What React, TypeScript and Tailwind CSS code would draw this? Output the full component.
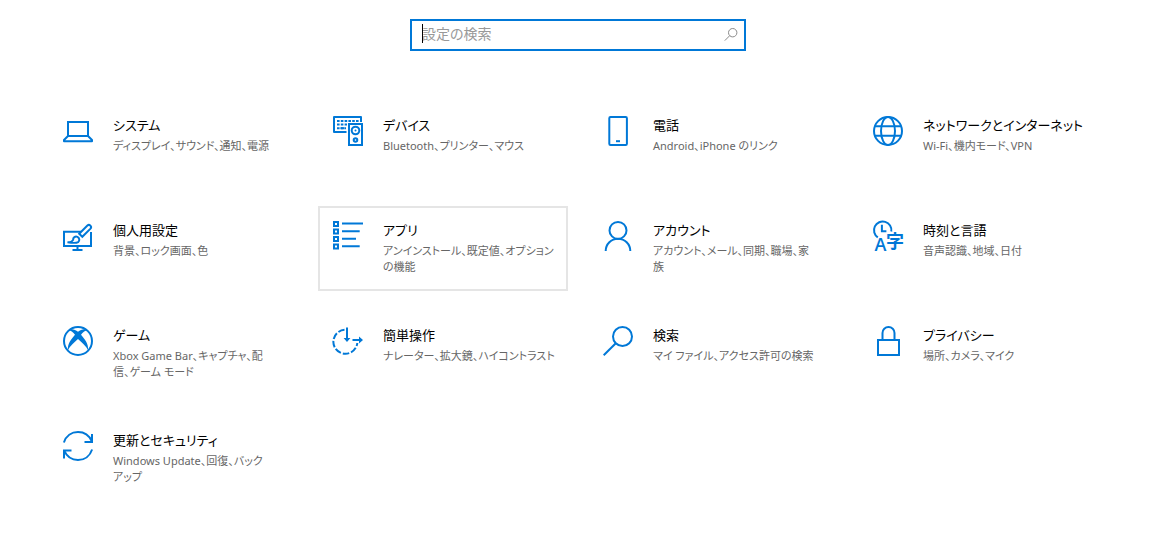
import type { ReactNode } from 'react'

type Category = {
    id: string
    title: string
    description: string[]
    icon: ReactNode
    hovered?: boolean
}

function Icon({ children }: { children: ReactNode }) {
    return (
        <svg
            viewBox="0 0 30 30"
            fill="none"
            stroke="#0078d7"
            strokeWidth="2"
            aria-hidden="true"
            className="size-[30px] shrink-0 overflow-visible"
        >
            {children}
        </svg>
    )
}

const categories: Category[] = [
    {
        id: 'system',
        title: 'システム',
        description: ['ディスプレイ、サウンド、通知、電源'],
        icon: (
            <Icon>
                <path d="M5 20V6h20v14" />
                <path d="M5 20h20l4 4v1.2H1V24z" strokeLinejoin="round" />
            </Icon>
        ),
    },
    {
        id: 'devices',
        title: 'デバイス',
        description: ['Bluetooth、プリンター、マウス'],
        icon: (
            <Icon>
                <path d="M13.5 16H1V1h27v5" strokeLinejoin="round" />
                <path d="M4 5h22" strokeDasharray="2.6 1.2" />
                <path d="M4 8.5h10M4 12.2h9" strokeDasharray="2.6 1.2" />
                <path d="M7.5 12.2h4" />
                <path d="M16 8h13v21H16z" />
                <circle cx="22.5" cy="14.5" r="3.8" />
                <circle cx="22.5" cy="14.5" r="1" fill="#0078d7" stroke="none" />
                <circle cx="22.5" cy="24" r="1.8" />
            </Icon>
        ),
    },
    {
        id: 'phone',
        title: '電話',
        description: ['Android、iPhone のリンク'],
        icon: (
            <Icon>
                <rect x="6.3" y="1" width="17.6" height="28" rx="1.2" />
                <path d="M13 25.2h4" />
            </Icon>
        ),
    },
    {
        id: 'network',
        title: 'ネットワークとインターネット',
        description: ['Wi-Fi、機内モード、VPN'],
        icon: (
            <Icon>
                <circle cx="15" cy="15" r="14" />
                <ellipse cx="15" cy="15" rx="7" ry="14" />
                <path d="M2 10.2h26M2 19.8h26" />
            </Icon>
        ),
    },
    {
        id: 'personalization',
        title: '個人用設定',
        description: ['背景、ロック画面、色'],
        icon: (
            <Icon>
                <path d="M18 10.8H1V25h27V11" />
                <path d="M14.5 25v4M9.5 29h10" />
                <path d="M16.2 12.7 24.4 4.5a2.2 2.2 0 0 1 3.1 3.1l-8.2 8.2z" fill="#fff" />
                <path d="M4.5 21.3c3.5 0 4.8-.8 5.6-2.4a3.1 3.1 0 1 1 5 2.2c-1.4.9-6 .9-10.600.2z" fill="#fff" />
            </Icon>
        ),
    },
    {
        id: 'apps',
        title: 'アプリ',
        description: ['アンインストール、既定値、オプション', 'の機能'],
        hovered: true,
        icon: (
            <Icon>
                <path d="M1 1h4v4H1zM1 8.5h4v4H1zM1 16h4v4H1zM1 23.5h4v4H1z" />
                <path d="M9 2.6h21M9 10.2h17.7M9 17.7h14M9 25.3h17.7" />
            </Icon>
        ),
    },
    {
        id: 'accounts',
        title: 'アカウント',
        description: ['アカウント、メール、同期、職場、家', '族'],
        icon: (
            <Icon>
                <circle cx="15" cy="9.4" r="8.5" />
                <path d="M2.7 30a12.3 12.3 0 0 1 24.6 0" />
            </Icon>
        ),
    },
    {
        id: 'time',
        title: '時刻と言語',
        description: ['音声認識、地域、日付'],
        icon: (
            <Icon>
                <path d="M4.8 16.4A8.7 8.7 0 1 1 18.3 10.5" />
                <path d="M8.9 3.7v6.6h4.5" />
                <g fill="#0078d7" stroke="none">
                    <text x="1.5" y="30" className="font-['Open_Sans',sans-serif] text-[18px] font-semibold">A</text>
                    <text x="13" y="26.5" className="font-['Noto_Sans_CJK_JP',sans-serif] text-[18px] font-bold">字</text>
                </g>
            </Icon>
        ),
    },
    {
        id: 'gaming',
        title: 'ゲーム',
        description: ['Xbox Game Bar、キャプチャ、配', '信、ゲーム モード'],
        icon: (
            <Icon>
                <circle cx="15" cy="15" r="14" />
                <path
                    d="M6 4.5C8.5 2.2 12 3.7 15 5.8c3-2.1 6.5-3.6 9-1.3-2.2.1-4 1.8-6 4.2 3.8 4.3 7.8 9.6 7 15.3-1.7-3.3-6-7.6-10-11-4 3.4-8.3 7.7-10 11-.8-5.7 3.2-11 7-15.3-2-2.4-3.8-4.1-6-4.2z"
                    fill="#0078d7"
                    stroke="none"
                />
            </Icon>
        ),
    },
    {
        id: 'ease-of-access',
        title: '簡単操作',
        description: ['ナレーター、拡大鏡、ハイコントラスト'],
        icon: (
            <Icon>
                <path d="M11.5 3.8A12 12 0 1 0 24.3 17" strokeDasharray="6.5 2" />
                <path d="M14 1.5v12M19.5 14h8" />
                <path d="M10.6 12h6.8L14 16zM26 10.6v6.8l4-3.4z" fill="#0078d7" stroke="none" />
            </Icon>
        ),
    },
    {
        id: 'search',
        title: '検索',
        description: ['マイ ファイル、アクセス許可の検索'],
        icon: (
            <Icon>
                <circle cx="19.5" cy="10.5" r="9.5" />
                <path d="M.7 29.3 12.8 17.2" />
            </Icon>
        ),
    },
    {
        id: 'privacy',
        title: 'プライバシー',
        description: ['場所、カメラ、マイク'],
        icon: (
            <Icon>
                <path d="M5 14h21v15H5z" />
                <path d="M9.5 14V7a6 6 0 0 1 12 0v7" />
            </Icon>
        ),
    },
    {
        id: 'update',
        title: '更新とセキュリティ',
        description: ['Windows Update、回復、バック', 'アップ'],
        icon: (
            <Icon>
                <path d="M.9 11.5C3 5 8.5 1 15 1c6 0 11.3 3.6 13.8 9.3" />
                <path d="M29 3v8h-7.5" />
                <path d="M29.1 18.5C27 25 21.5 29 15 29c-6 0-11.3-3.6-13.8-9.3" />
                <path d="M1 27.5v-8h7.5" />
            </Icon>
        ),
    },
]

function SearchBox() {
    return (
        <div className="relative w-full max-w-[336px]">
            <input
                type="text"
                aria-label="設定の検索"
                placeholder="設定の検索"
                className="block h-8 w-full border-2 border-[#0078d7] bg-white pb-1 pl-2.5 pr-8 text-sm text-black caret-transparent outline-none placeholder:text-[#999999]"
            />
            <span className="absolute left-3 top-[5px] h-[19px] w-px bg-black" />
            <svg
                viewBox="0 0 14 14"
                fill="none"
                stroke="#8a8a8a"
                aria-hidden="true"
                className="absolute right-2 top-2 size-3.5"
            >
                <circle cx="8.7" cy="5.7" r="4.2" />
                <path d="M5.7 8.7.8 13.6" />
            </svg>
        </div>
    )
}

function CategoryTile({ category }: { category: Category }) {
    return (
        <a
            href={`#${category.id}`}
            className={`flex h-full min-h-[85px] gap-5 border-2 p-[13px] hover:border-[#e5e5e5] ${
                category.hovered ? 'border-[#e5e5e5]' : 'border-transparent'
            }`}
        >
            {category.icon}
            <span className="flex min-w-0 flex-1 flex-col gap-1 whitespace-nowrap">
                <span className="text-[13px] leading-[18px] text-black">{category.title}</span>
                <span className="text-[11px] leading-4 text-[#666666]">
                    {category.description.map((line) => (
                        <span key={line} className="block">{line}</span>
                    ))}
                </span>
            </span>
        </a>
    )
}

export default function App() {
    return (
        <main
            lang="ja"
            className="min-h-screen bg-white pb-8 pl-[7px] pt-[19px] font-['Noto_Sans','Noto_Sans_CJK_JP',sans-serif] [font-feature-settings:'palt']"
        >
            <div className="flex justify-center">
                <SearchBox />
            </div>
            <nav aria-label="設定" className="mt-[50px]">
                <ul className="grid grid-cols-[repeat(auto-fill,250px)] justify-center gap-5">
                    {categories.map((category) => (
                        <li key={category.id}>
                            <CategoryTile category={category} />
                        </li>
                    ))}
                </ul>
            </nav>
        </main>
    )
}
